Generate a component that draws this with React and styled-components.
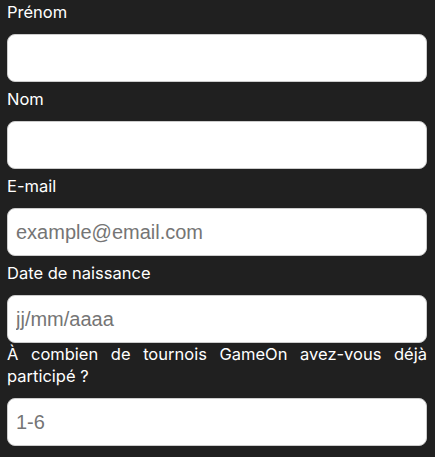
import React from 'react';
import styled, { createGlobalStyle } from 'styled-components';

const GlobalStyle = createGlobalStyle`
  html, body {
    margin: 0;
    padding: 0;
    background: #202020;
  }
  * {
    box-sizing: border-box;
  }
`;

const Form = styled.form`
  display: flex;
  flex-direction: column;
  padding: 1px 8px 0 7px;
  width: 435px;
`;

const Field = styled.div`
  display: flex;
  flex-direction: column;
  margin-top: ${(p) => (p.$first || p.$tight ? '0' : '6px')};
`;

const Label = styled.label`
  font-family: Inter, 'Liberation Sans', sans-serif;
  font-size: 16.5px;
  font-weight: 400;
  line-height: 22px;
  color: #ffffff;
  margin-bottom: 11px;
  text-align: ${(p) => (p.$question ? 'justify' : 'left')};
`;

const TextInput = styled.input`
  width: 100%;
  height: 48px;
  margin: 0;
  padding: 8px;
  border: 0.8px solid #cccccc;
  border-radius: 8px;
  background: #ffffff;
  outline: none;
  font-family: 'Liberation Sans', Arial, sans-serif;
  font-size: 20px;
  color: #222222;

  &::placeholder {
    color: #757575;
  }
`;

const fields = [
  { id: 'first', label: 'Prénom', placeholder: '' },
  { id: 'last', label: 'Nom', placeholder: '' },
  { id: 'email', label: 'E-mail', placeholder: 'example@email.com' },
  { id: 'birthdate', label: 'Date de naissance', placeholder: 'jj/mm/aaaa' },
];

const App = () => (
  <>
    <GlobalStyle />
    <Form onSubmit={(e) => e.preventDefault()}>
      {fields.map((f, i) => (
        <Field key={f.id} $first={i === 0}>
          <Label htmlFor={f.id}>{f.label}</Label>
          <TextInput id={f.id} type="text" placeholder={f.placeholder} />
        </Field>
      ))}
      <Field $tight>
        <Label htmlFor="quantity" $question>
          À combien de tournois GameOn avez-vous déjà participé ?
        </Label>
        <TextInput id="quantity" type="text" placeholder="1-6" />
      </Field>
    </Form>
  </>
);

export default App;
